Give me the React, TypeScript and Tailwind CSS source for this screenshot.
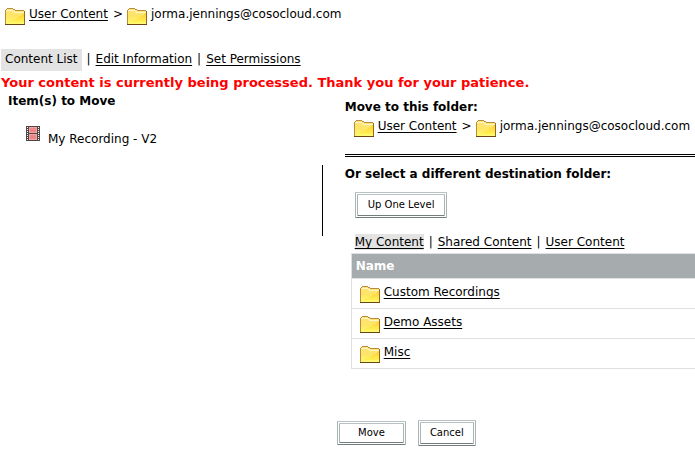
import { useState } from 'react';

const folders = ['Custom Recordings', 'Demo Assets', 'Misc'];

function FolderIcon() {
  return (
    <svg width="20" height="17" viewBox="0 0 20 17" className="shrink-0" shapeRendering="crispEdges" aria-hidden="true">
      <defs>
        <linearGradient id="face" x1="0" y1="0" x2="0" y2="1">
          <stop offset="0" stopColor="#ffe27c" />
          <stop offset="0.5" stopColor="#ffe565" />
          <stop offset="1" stopColor="#fffb70" />
        </linearGradient>
        <linearGradient id="shade" x1="0" y1="0" x2="0" y2="1">
          <stop offset="0" stopColor="#ffc928" />
          <stop offset="1" stopColor="#fff04c" />
        </linearGradient>
      </defs>
      <path d="M1 1H8V2H10V3H19V16H1Z" fill="url(#face)" />
      <path d="M19 5V14H3L10 11L15 8Z" fill="url(#shade)" opacity="0.8" />
      <path d="M1 2H8V3H10V4H19V5H9V4H8V3H1Z" fill="#fff6c4" />
      <path d="M2 0H8V1H2ZM1 1H2V2H1ZM8 1H10V2H8ZM10 2H19V3H10ZM0 2H1V16H0Z" fill="#b98d3c" />
      <path d="M19 3H20V16H19Z" fill="#94671f" />
      <path d="M0 16H20V17H0Z" fill="#6e4412" />
    </svg>
  );
}

function FilmIcon() {
  return (
    <svg width="14" height="15" viewBox="0 0 14 15" className="shrink-0" shapeRendering="crispEdges" aria-hidden="true">
      <path d="M0 0H14V15H0Z" fill="#4b4747" />
      <path d="M3 1H11V7H3ZM3 8H11V14H3Z" fill="#f3a5a5" />
      <path d="M4 2H10V6H4ZM4 9H10V13H4Z" fill="#ee8686" />
      <path
        d="M1 1H2V2H1ZM1 3H2V4H1ZM1 5H2V6H1ZM1 7H2V8H1ZM1 9H2V10H1ZM1 11H2V12H1ZM1 13H2V14H1ZM12 1H13V2H12ZM12 3H13V4H12ZM12 5H13V6H12ZM12 7H13V8H12ZM12 9H13V10H12ZM12 11H13V12H12ZM12 13H13V14H12Z"
        fill="#fff"
      />
    </svg>
  );
}

function Breadcrumb() {
  return (
    <nav className="flex h-5 items-start whitespace-nowrap" aria-label="Folder path">
      <div className="flex items-start gap-1">
        <div className="pt-0.5"><FolderIcon /></div>
        <a href="#user-content" className="underline underline-offset-2">User Content</a>
      </div>
      <span className="pr-1 pl-[5px]">&gt;</span>
      <div className="flex items-start gap-1">
        <div className="pt-0.5"><FolderIcon /></div>
        <span>jorma.jennings@cosocloud.com</span>
      </div>
    </nav>
  );
}

const buttonClass =
  'border-3 border-double border-t-[#b9c2c2] border-l-[#a9b3b3] border-r-[#a9b3b3] border-b-[#737d7d] bg-white text-[10px] leading-4';

export default function App() {
  const [tab, setTab] = useState('My Content');

  return (
    <div className="bg-white font-['DejaVu_Sans',sans-serif] text-xs leading-4 text-black">
      <div className="pt-[6px] pl-[5px]">
        <Breadcrumb />
      </div>

      <nav className="mt-[23px] flex items-center gap-[5px] pl-px">
        <span className="bg-[#e3e3e3] px-1 pt-[2px] pb-1">Content List</span>
        <span className="pb-0.5">|</span>
        <a href="#edit" className="pb-0.5 underline underline-offset-2">Edit Information</a>
        <span className="pb-0.5">|</span>
        <a href="#permissions" className="pb-0.5 underline underline-offset-2">Set Permissions</a>
      </nav>

      <p className="mt-1 pl-px text-[13px] leading-4 font-bold text-[#f00]">
        Your content is currently being processed. Thank you for your patience.
      </p>

      <div className="grid grid-cols-[46%_1fr]">
        <section className="pt-[2px] pl-2">
          <h2 className="font-bold">Item(s) to Move</h2>
          <div className="mt-[17px] flex items-start gap-2 pl-[18px]">
            <FilmIcon />
            <span className="pt-[5px]">My Recording - V2</span>
          </div>
        </section>

        <div className="flex gap-[22px]">
          <div className="mt-[74px] ml-[2px] h-[71px] w-px shrink-0 bg-black" />
          <section className="min-w-0 flex-1 pt-2">
            <h2 className="font-bold">Move to this folder:</h2>
            <div className="mt-[3px] pl-[9px]">
              <Breadcrumb />
            </div>
            <hr className="mt-4 border-t-3 border-double border-black" />
            <h2 className="mt-[9px] font-bold">Or select a different destination folder:</h2>
            <div className="mt-[10px] pl-[10px]">
              <button type="button" className={`${buttonClass} px-[10px] py-0.5`}>Up One Level</button>
            </div>
            <nav className="mt-4 flex gap-[5px] pl-[10px] whitespace-nowrap">
              {['My Content', 'Shared Content', 'User Content'].map((name, i) => (
                <div key={name} className="flex gap-[5px]">
                  {i > 0 && <span>|</span>}
                  <a
                    href="#content"
                    onClick={() => setTab(name)}
                    className={`underline underline-offset-2 ${tab === name ? 'bg-[#e3e3e3]' : ''}`}
                  >
                    {name}
                  </a>
                </div>
              ))}
            </nav>
            <div className="mt-[3px] pl-[6px]">
              <table className="w-full border-collapse">
                <thead>
                  <tr>
                    <th className="h-[25px] border border-r-0 border-[#e0e0e0] bg-[#a6abae] px-1 text-left font-bold text-white">Name</th>
                  </tr>
                </thead>
                <tbody>
                  {folders.map((folder) => (
                    <tr key={folder}>
                      <td className="h-[30px] border border-r-0 border-[#e0e0e0] px-2">
                        <div className="flex items-start gap-1">
                          <div className="pt-0.5"><FolderIcon /></div>
                          <a href="#folder" className="underline underline-offset-2">{folder}</a>
                        </div>
                      </td>
                    </tr>
                  ))}
                </tbody>
              </table>
            </div>
          </section>
        </div>
      </div>

      <div className="mt-[51px] grid grid-cols-[48.5%_1fr]">
        <div className="col-start-2 flex items-center gap-3">
          <button type="button" className={`${buttonClass} px-[18px] py-px`}>Move</button>
          <button type="button" className={`${buttonClass} px-[9px] py-0.5`}>Cancel</button>
        </div>
      </div>
    </div>
  );
}
